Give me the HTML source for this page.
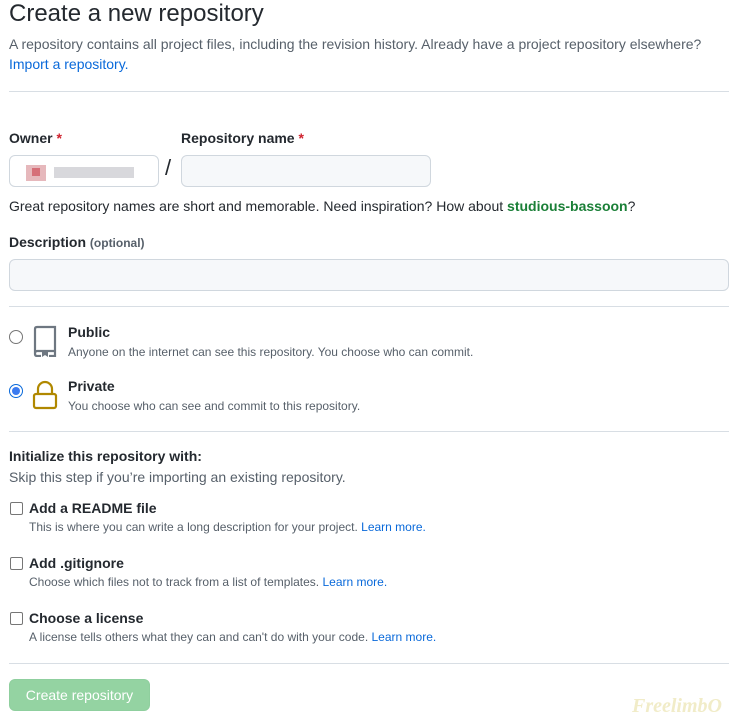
<!DOCTYPE html><html><head><style>
body{margin:0;width:737px;height:722px;background:#fff;font-family:"Liberation Sans",sans-serif;color:#24292f;position:relative;overflow:hidden}
.a{position:absolute;white-space:nowrap}
.b{font-weight:bold;font-size:14px}
.s{font-size:12px;color:#57606a}
.hr{position:absolute;left:9px;width:720px;height:1px;background:#d8dee4}
.in{position:absolute;height:30px;border:1px solid #d0d7de;border-radius:6px;background:#f6f8fa}
.r{color:#cf222e}
a{color:#0969da;text-decoration:none}
.cb{position:absolute;left:10px;width:11px;height:11px;border:1px solid #767676;border-radius:2px;background:#fff}
.rd{position:absolute;left:9px;width:12px;height:12px;border:1px solid #767676;border-radius:50%;background:#fff}
</style></head><body>
<div class="a" style="left:9px;top:0;font-size:24px">Create a new repository</div>
<div class="a" style="left:9px;top:36px;font-size:14px;color:#57606a">A repository contains all project files, including the revision history. Already have a project repository elsewhere?</div>
<div class="a" style="left:9px;top:56px;font-size:14px"><a>Import a repository.</a></div>
<div class="hr" style="top:91px"></div>
<div class="a b" style="left:9px;top:130px">Owner <span class="r">*</span></div>
<div class="a b" style="left:181px;top:130px">Repository name <span class="r">*</span></div>
<div class="in" style="left:9px;top:155px;width:148px;background:#fff">
<div style="position:absolute;left:16px;top:9px;width:20px;height:16px;background:#e6b8bc"></div>
<div style="position:absolute;left:22px;top:12px;width:8px;height:8px;background:#d66f78"></div>
<div style="position:absolute;left:44px;top:11px;width:80px;height:11px;background:#d8d8dc"></div></div>
<div class="a" style="left:165px;top:155px;font-size:22px">/</div>
<div class="in" style="left:181px;top:155px;width:248px"></div>
<div class="a" style="left:9px;top:198px;font-size:14px">Great repository names are short and memorable. Need inspiration? How about <b style="color:#1a7f37">studious-bassoon</b>?</div>
<div class="a b" style="left:9px;top:234px">Description <span style="font-size:12px;color:#57606a">(optional)</span></div>
<div class="in" style="left:9px;top:259px;width:718px"></div>
<div class="hr" style="top:306px"></div>
<div class="rd" style="top:330px"></div>
<svg class="a" style="left:32px;top:325px" width="26" height="32" viewBox="0 0 26 32"><path d="M3 29V4Q3 2 5 2H23V26H5Q3 26 3 29M3 29Q3 31 5 31H9M17 31H23V26" fill="none" stroke="#6e7781" stroke-width="2.2"/><path d="M10 27H16V32L13 30L10 32Z" fill="#6e7781"/></svg>
<div class="a b" style="left:68px;top:324px">Public</div>
<div class="a s" style="left:68px;top:345px">Anyone on the internet can see this repository. You choose who can commit.</div>
<div class="rd" style="top:384px;border-color:#0969da;background:#fff"><div style="position:absolute;left:2px;top:2px;width:8px;height:8px;border-radius:50%;background:#3b7bf0"></div></div>
<svg class="a" style="left:32px;top:379px" width="26" height="32" viewBox="0 0 26 32"><path d="M6 15V10A7 7 0 0 1 20 10V15" fill="none" stroke="#b08800" stroke-width="2.2"/><rect x="2" y="15" width="22" height="14" rx="2" fill="none" stroke="#b08800" stroke-width="2.2"/></svg>
<div class="a b" style="left:68px;top:378px">Private</div>
<div class="a s" style="left:68px;top:399px">You choose who can see and commit to this repository.</div>
<div class="hr" style="top:431px"></div>
<div class="a b" style="left:9px;top:448px">Initialize this repository with:</div>
<div class="a" style="left:9px;top:469px;font-size:14px;color:#57606a">Skip this step if you’re importing an existing repository.</div>
<div class="cb" style="top:502px"></div>
<div class="a b" style="left:29px;top:500px">Add a README file</div>
<div class="a s" style="left:29px;top:520px">This is where you can write a long description for your project. <a>Learn more.</a></div>
<div class="cb" style="top:557px"></div>
<div class="a b" style="left:29px;top:555px">Add .gitignore</div>
<div class="a s" style="left:29px;top:575px">Choose which files not to track from a list of templates. <a>Learn more.</a></div>
<div class="cb" style="top:612px"></div>
<div class="a b" style="left:29px;top:610px">Choose a license</div>
<div class="a s" style="left:29px;top:630px">A license tells others what they can and can't do with your code. <a>Learn more.</a></div>
<div class="hr" style="top:663px"></div>
<div class="a" style="left:9px;top:679px;width:139px;height:30px;border:1px solid #8fcf9e;border-radius:6px;background:#94d3a2;color:#fff;font-size:14px;line-height:30px;text-align:center">Create repository</div>
<div class="a" style="left:632px;top:695px;font-family:'Liberation Serif',serif;font-weight:bold;font-style:italic;font-size:20px;color:#f1ecc8">FreelimbO</div>
</body></html>
